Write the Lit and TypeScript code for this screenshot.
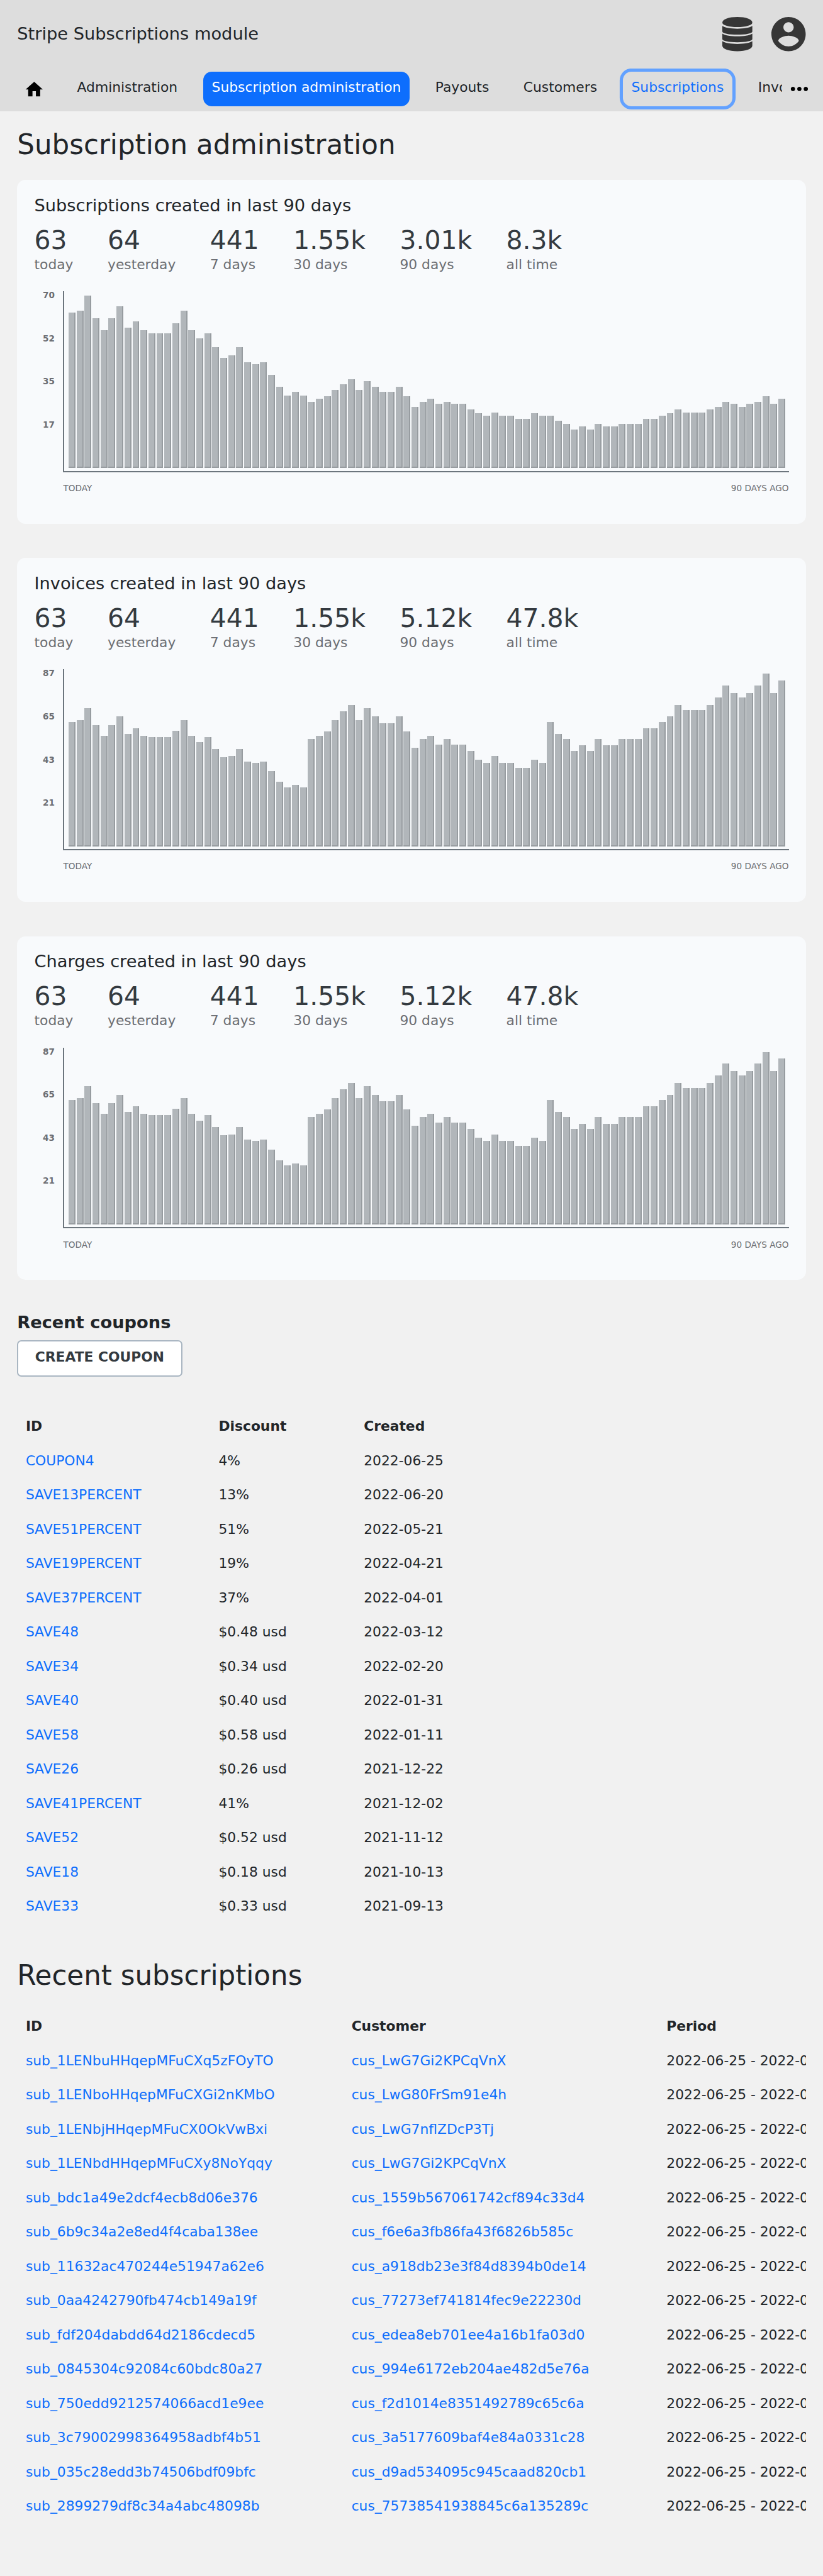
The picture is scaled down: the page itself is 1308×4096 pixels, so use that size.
import { LitElement, html, css, svg } from "lit";
import { customElement, property } from "lit/decorators.js";

interface Stat {
  value: string;
  label: string;
}

const SUBSCRIPTION_BARS = [
  145, 147, 161, 140, 129, 140, 151, 131, 137, 129, 126, 126, 126, 135, 147,
  129, 121, 126, 113, 103, 105, 113, 99, 97, 99, 87, 76, 68, 71, 68,
  62, 65, 67, 73, 78, 83, 73, 81, 76, 71, 71, 76, 67,
  57, 62, 65, 60, 62, 60, 60, 55, 51, 49, 52, 49, 49, 46, 46, 51, 49, 49,
  44, 41, 36, 39, 36, 41, 39, 39, 41, 41, 41, 46, 46, 49, 51, 55, 52, 52, 52,
  55, 57, 62, 60, 57, 60, 62, 67, 60, 65,
];

const INVOICE_BARS = [
  116, 118, 129, 113, 103, 113, 121, 105, 110, 103, 102, 102, 102, 108, 118,
  103, 97, 102, 91, 83, 84, 91, 79, 78, 79, 70, 60, 55, 57, 55,
  100, 103, 107, 118, 126, 132, 118, 129, 121, 115, 115, 121, 107,
  92, 100, 103, 95, 100, 95, 95, 89, 81, 78, 84, 78, 78, 73, 73, 81, 78, 116,
  105, 100, 89, 94, 89, 100, 94, 94, 100, 100, 100, 110, 110, 116, 121, 132, 127, 127, 127,
  132, 139, 150, 143, 139, 143, 150, 161, 143, 155,
];

const LABELS = ["today", "yesterday", "7 days", "30 days", "90 days", "all time"];

const stats = (...values: string[]): Stat[] =>
  values.map((value, i) => ({ value, label: LABELS[i] }));

const CHARTS = [
  {
    heading: "Subscriptions created in last 90 days",
    stats: stats("63", "64", "441", "1.55k", "3.01k", "8.3k"),
    ticks: ["70", "52", "35", "17"],
    bars: SUBSCRIPTION_BARS,
  },
  {
    heading: "Invoices created in last 90 days",
    stats: stats("63", "64", "441", "1.55k", "5.12k", "47.8k"),
    ticks: ["87", "65", "43", "21"],
    bars: INVOICE_BARS,
  },
  {
    heading: "Charges created in last 90 days",
    stats: stats("63", "64", "441", "1.55k", "5.12k", "47.8k"),
    ticks: ["87", "65", "43", "21"],
    bars: INVOICE_BARS,
  },
];

const COUPONS = [
  ["COUPON4", "4%", "2022-06-25"],
  ["SAVE13PERCENT", "13%", "2022-06-20"],
  ["SAVE51PERCENT", "51%", "2022-05-21"],
  ["SAVE19PERCENT", "19%", "2022-04-21"],
  ["SAVE37PERCENT", "37%", "2022-04-01"],
  ["SAVE48", "$0.48 usd", "2022-03-12"],
  ["SAVE34", "$0.34 usd", "2022-02-20"],
  ["SAVE40", "$0.40 usd", "2022-01-31"],
  ["SAVE58", "$0.58 usd", "2022-01-11"],
  ["SAVE26", "$0.26 usd", "2021-12-22"],
  ["SAVE41PERCENT", "41%", "2021-12-02"],
  ["SAVE52", "$0.52 usd", "2021-11-12"],
  ["SAVE18", "$0.18 usd", "2021-10-13"],
  ["SAVE33", "$0.33 usd", "2021-09-13"],
];

const SUBSCRIPTIONS = [
  ["sub_1LENbuHHqepMFuCXq5zFOyTO", "cus_LwG7Gi2KPCqVnX"],
  ["sub_1LENboHHqepMFuCXGi2nKMbO", "cus_LwG80FrSm91e4h"],
  ["sub_1LENbjHHqepMFuCX0OkVwBxi", "cus_LwG7nflZDcP3Tj"],
  ["sub_1LENbdHHqepMFuCXy8NoYqqy", "cus_LwG7Gi2KPCqVnX"],
  ["sub_bdc1a49e2dcf4ecb8d06e376", "cus_1559b567061742cf894c33d4"],
  ["sub_6b9c34a2e8ed4f4caba138ee", "cus_f6e6a3fb86fa43f6826b585c"],
  ["sub_11632ac470244e51947a62e6", "cus_a918db23e3f84d8394b0de14"],
  ["sub_0aa4242790fb474cb149a19f", "cus_77273ef741814fec9e22230d"],
  ["sub_fdf204dabdd64d2186cdecd5", "cus_edea8eb701ee4a16b1fa03d0"],
  ["sub_0845304c92084c60bdc80a27", "cus_994e6172eb204ae482d5e76a"],
  ["sub_750edd9212574066acd1e9ee", "cus_f2d1014e8351492789c65c6a"],
  ["sub_3c79002998364958adbf4b51", "cus_3a5177609baf4e84a0331c28"],
  ["sub_035c28edd3b74506bdf09bfc", "cus_d9ad534095c945caad820cb1"],
  ["sub_2899279df8c34a4abc48098b", "cus_75738541938845c6a135289c"],
];

const PERIOD = "2022-06-25 - 2022-07-25";

const homeIcon = svg`<path d="M10 20v-6h4v6h5v-8h3L12 3 2 12h3v8z"/>`;
const moreIcon = svg`<path d="M6 10c-1.1 0-2 .9-2 2s.9 2 2 2 2-.9 2-2-.9-2-2-2zm12 0c-1.1 0-2 .9-2 2s.9 2 2 2 2-.9 2-2-.9-2-2-2zm-6 0c-1.1 0-2 .9-2 2s.9 2 2 2 2-.9 2-2-.9-2-2-2z"/>`;
const stackIcon = svg`<path d="M0 84C0 32 100 0 224 0S448 32 448 84C448 124 348 150 224 150S0 124 0 84z"/><path d="M0 134c45 27 130 41 224 41s179-14 224-41v84c0 28-100 46-224 46S0 246 0 218z"/><path d="M0 248c45 27 130 41 224 41s179-14 224-41v84c0 28-100 46-224 46S0 360 0 332z"/><path d="M0 362c45 27 130 41 224 41s179-14 224-41v66c0 52-100 84-224 84S0 480 0 428z"/>`;
const accountIcon = svg`<path d="M12 2C6.48 2 2 6.48 2 12s4.48 10 10 10 10-4.48 10-10S17.52 2 12 2zm0 3c1.66 0 3 1.34 3 3s-1.34 3-3 3-3-1.34-3-3 1.34-3 3-3zm0 14.2c-2.5 0-4.71-1.28-6-3.22.03-1.99 4-3.08 6-3.08 1.99 0 5.97 1.09 6 3.08-1.29 1.94-3.5 3.22-6 3.22z"/>`;

@customElement("stat-chart")
export class StatChart extends LitElement {
  @property() heading = "";
  @property({ attribute: false }) stats: Stat[] = [];
  @property({ attribute: false }) ticks: string[] = [];
  @property({ attribute: false }) bars: number[] = [];

  static styles = css`
    :host {
      display: block;
      box-sizing: border-box;
      height: 321px;
      padding: 0 16px;
      border-radius: 8px;
      background: #f8fafc;
    }
    .heading {
      margin: 0;
      height: 28px;
      padding-top: 14px;
      font-size: 16px;
      font-weight: 400;
      line-height: 19.6px;
    }
    .stats {
      display: flex;
      gap: 32px;
      height: 62px;
    }
    .value {
      font-size: 24px;
      line-height: 28.4px;
      color: #343a40;
    }
    .label {
      font-size: 12.8px;
      line-height: 18px;
      color: #6c6e73;
    }
    .chart {
      display: flex;
      height: 169px;
    }
    .ticks {
      width: 19px;
      padding-right: 8px;
      text-align: right;
      font-size: 8px;
      font-weight: 700;
      line-height: 7.8px;
      color: #6c6e73;
    }
    .tick {
      height: 40.25px;
    }
    .plot {
      box-sizing: border-box;
      flex: 1;
      display: flex;
      align-items: flex-end;
      gap: 1px;
      padding: 0 2.9px 2.8px 3.9px;
      border-left: 1.2px solid #6c757d;
      border-bottom: 1.2px solid #6c757d;
    }
    .bar {
      box-sizing: border-box;
      flex: 1 1 0;
      min-width: 0;
      background: #b1b6ba;
      border-right: 1.2px solid #979ca0;
      border-bottom: 1.2px solid #979ca0;
    }
    .range {
      display: flex;
      justify-content: space-between;
      padding: 10px 0 0 27px;
      font-size: 8px;
      line-height: 10.4px;
      color: #6c6e73;
    }
  `;

  render() {
    return html`
      <h2 class="heading">${this.heading}</h2>
      <div class="stats">
        ${this.stats.map(
          (s) => html`<div>
            <div class="value">${s.value}</div>
            <div class="label">${s.label}</div>
          </div>`
        )}
      </div>
      <div class="chart">
        <div class="ticks">${this.ticks.map((t) => html`<div class="tick">${t}</div>`)}</div>
        <div class="plot">
          ${this.bars.map((h) => html`<div class="bar" style="height:${h}px"></div>`)}
        </div>
      </div>
      <div class="range"><span>TODAY</span><span>90 DAYS AGO</span></div>
    `;
  }
}

@customElement("app-root")
export class AppRoot extends LitElement {
  static styles = css`
    :host {
      display: block;
    }
    .page {
      zoom: 1.703125;
      width: 768px;
      height: 2405px;
      overflow: hidden;
      background: #f1f1f1;
      color: #212529;
      font-family: "DejaVu Sans", sans-serif;
      font-size: 12.8px;
    }
    .header {
      height: 104px;
      background: #dddddd;
    }
    .topbar {
      display: flex;
      align-items: center;
      height: 64px;
      padding: 0 16px;
      gap: 18px;
    }
    .brand {
      flex: 1;
      font-size: 16px;
      line-height: 24px;
    }
    .icon {
      display: block;
      fill: #363636;
    }
    .stack {
      width: 28px;
      height: 32px;
    }
    .account {
      width: 32px;
      height: 32px;
    }
    .nav {
      display: flex;
      height: 40px;
      padding-left: 22.4px;
    }
    .home {
      width: 19.2px;
      height: 19.2px;
      margin: 9.9px 22.4px 0 0;
      fill: #000;
    }
    .items {
      display: flex;
      gap: 16px;
      width: 666px;
      height: 37px;
      padding-top: 3px;
      overflow: hidden;
    }
    .item {
      flex: none;
      height: 32px;
      padding: 0 8px;
      border-radius: 8px;
      line-height: 29.8px;
      color: inherit;
      text-decoration: none;
    }
    .current {
      background: #0d6efd;
      color: #fff;
    }
    .focused {
      color: #0d6efd;
      box-shadow: 0 0 0 3px #62a1ff;
    }
    .more {
      width: 24px;
      height: 24px;
      margin: 7px 0 0 4px;
      fill: #000;
    }
    .content {
      padding: 0 16px;
    }
    .title {
      margin: 0;
      height: 64px;
      font-size: 25.6px;
      font-weight: 400;
      line-height: 63px;
    }
    .charts {
      display: flex;
      flex-direction: column;
      gap: 32px;
    }
    .coupons-title {
      margin: 0;
      height: 26.3px;
      padding-top: 29.7px;
      font-size: 16px;
      font-weight: 700;
      line-height: 20px;
    }
    .button {
      display: block;
      box-sizing: border-box;
      width: 154px;
      height: 34px;
      margin-bottom: 31px;
      padding: 0 0 2px;
      border: 1.2px solid #a9b6c2;
      border-radius: 4px;
      background: #fff;
      color: #343a40;
      font: 700 12.8px/29.2px "DejaVu Sans", sans-serif;
      text-align: center;
    }
    .row {
      display: grid;
      height: 32px;
      padding-left: 8px;
      line-height: 32px;
      white-space: nowrap;
    }
    .coupon {
      grid-template-columns: 180px 135.5px 1fr;
    }
    .subscription {
      grid-template-columns: 304px 294px 122px;
    }
    .subscriptions {
      overflow: hidden;
    }
    .head {
      font-weight: 700;
    }
    .link {
      color: #0d6efd;
      text-decoration: none;
    }
    .subscriptions-title {
      margin: 0;
      height: 63px;
      padding-top: 17px;
      font-size: 25.6px;
      font-weight: 400;
      line-height: 63px;
    }
  `;

  render() {
    return html`
      <div class="page">
        <header class="header">
          <div class="topbar">
            <div class="brand">Stripe Subscriptions module</div>
            <svg class="icon stack" viewBox="0 0 448 512">${stackIcon}</svg>
            <svg class="icon account" viewBox="2 2 20 20">${accountIcon}</svg>
          </div>
          <nav class="nav">
            <svg class="icon home" viewBox="0 0 24 24">${homeIcon}</svg>
            <div class="items">
              <a class="item">Administration</a>
              <a class="item current">Subscription administration</a>
              <a class="item">Payouts</a>
              <a class="item">Customers</a>
              <a class="item focused">Subscriptions</a>
              <a class="item">Invoices</a>
            </div>
            <svg class="icon more" viewBox="0 0 24 24">${moreIcon}</svg>
          </nav>
        </header>
        <main class="content">
          <h1 class="title">Subscription administration</h1>
          <section class="charts">
            ${CHARTS.map(
              (c) => html`<stat-chart
                .heading=${c.heading}
                .stats=${c.stats}
                .ticks=${c.ticks}
                .bars=${c.bars}
              ></stat-chart>`
            )}
          </section>
          <h3 class="coupons-title">Recent coupons</h3>
          <button class="button">CREATE COUPON</button>
          <section>
            <div class="row coupon head">
              <span>ID</span><span>Discount</span><span>Created</span>
            </div>
            ${COUPONS.map(
              ([id, discount, created]) => html`<div class="row coupon">
                <a class="link">${id}</a><span>${discount}</span><span>${created}</span>
              </div>`
            )}
          </section>
          <h2 class="subscriptions-title">Recent subscriptions</h2>
          <section class="subscriptions">
            <div class="row subscription head">
              <span>ID</span><span>Customer</span><span>Period</span>
            </div>
            ${SUBSCRIPTIONS.map(
              ([id, customer]) => html`<div class="row subscription">
                <a class="link">${id}</a><a class="link">${customer}</a><span>${PERIOD}</span>
              </div>`
            )}
          </section>
        </main>
      </div>
    `;
  }
}
